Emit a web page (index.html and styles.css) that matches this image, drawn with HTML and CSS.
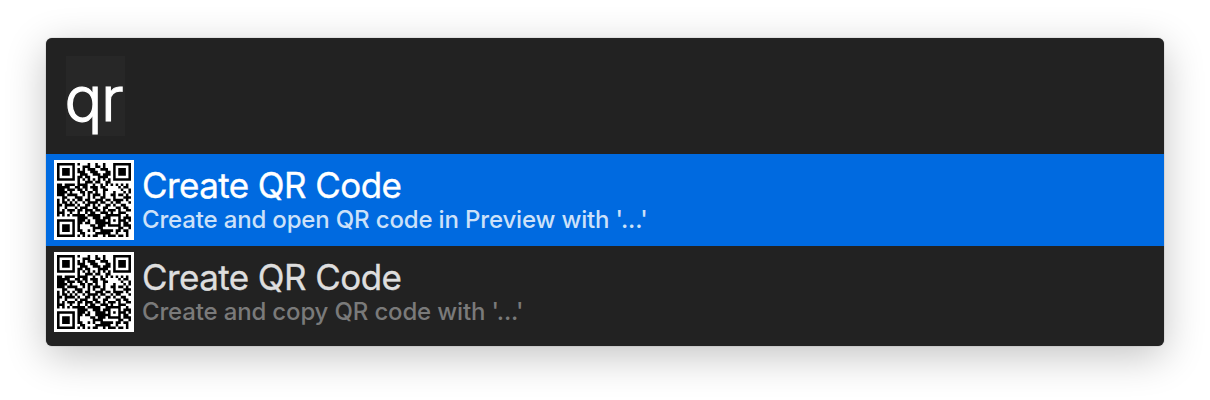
FILE: index.html
```html
<!DOCTYPE html>
<html lang="en">
<head>
<meta charset="utf-8">
<title>Launcher</title>
<link rel="stylesheet" href="styles.css">
</head>
<body>
<main class="launcher">
  <div class="search"><span class="query">qr</span></div>
  <div class="result selected">
    <svg class="code" viewBox="-1.18 -1.18 31.36 31.36"></svg>
    <div class="copy">
      <div class="title">Create QR Code</div>
      <div class="subtitle">Create and open QR code in Preview with '...'</div>
    </div>
  </div>
  <div class="result">
    <svg class="code" viewBox="-1.18 -1.18 31.36 31.36"></svg>
    <div class="copy">
      <div class="title">Create QR Code</div>
      <div class="subtitle">Create and copy QR code with '...'</div>
    </div>
  </div>
</main>
<script src="code.js"></script>
</body>
</html>
```
FILE: styles.css
```css
body {
  box-sizing: border-box;
  height: 400px;
  margin: 0;
  padding: 38px 46px 54px;
  overflow: hidden;
  background: #fff;
  font-family: Inter, "Liberation Sans", sans-serif;
}
.launcher {
  height: 308px;
  background: #222;
  border-radius: 6px;
  overflow: hidden;
  box-shadow: 0 0 1px rgba(0,0,0,.6), 0 10px 40px rgba(0,0,0,.24);
}
.search {
  box-sizing: border-box;
  height: 116px;
  padding: 18px 20px;
}
.query {
  display: block;
  box-sizing: border-box;
  width: 59px;
  height: 80px;
  padding-top: 2px;
  background: #272727;
  color: #fff;
  font-size: 63px;
  line-height: 80px;
  font-weight: 300;
  -webkit-text-stroke: 1.2px #fff;
  letter-spacing: -1.4px;
  text-indent: -1.5px;
  white-space: nowrap;
}
.result {
  display: flex;
  gap: 8px;
  height: 92px;
  box-sizing: border-box;
  padding: 6px 8px;
  color: #dedede;
}
.selected { background: #006ae0; color: #fff; }
.code {
  flex: none;
  width: 80px;
  height: 80px;
  background: #fff;
}
.copy { padding-top: 3px; white-space: nowrap; }
.title {
  font-size: 35px;
  line-height: 44px;
  font-weight: 400;
  -webkit-text-stroke: .35px currentColor;
  letter-spacing: -.58px;
}
.subtitle {
  font-size: 24px;
  line-height: 26px;
  font-weight: 500;
  letter-spacing: -.16px;
  color: #7a7a7a;
}
.selected .subtitle { color: #cce1f9; }
```
FILE: code.js
```js
const rows = [
  "11111110100010010010001111111",
  "10000010001110011010001000001",
  "10111010101011100111001011101",
  "10111010111001110001101011101",
  "10111010011100111011101011101",
  "10000010110110001111001000001",
  "11111110101010101010101111111",
  "00000000100111011001100000000",
  "11011110111100100101010101010",
  "11111001101101110110000010110",
  "11101110110100110011000001001",
  "11110100011011010010001000101",
  "11101111001010111010011011010",
  "00110001110010100110001000111",
  "10101010110110011101101111010",
  "10110101001011110110010110001",
  "11011110100110101001101001100",
  "10010001011100110011000110110",
  "10101110110111011010111010011",
  "11100100100101100111010011100",
  "10101011111011111001111110010",
  "00000000111100111011100010111",
  "11111110111010011110101011101",
  "10000010110110011111100010110",
  "10111010100001101110111110111",
  "10111010100000111100000011001",
  "10111010110010100111110110110",
  "10000010011000011111100100010",
  "11111110101010110010111011010"
];
const path = rows.map((row, y) =>
  [...row].map((cell, x) => cell === "1" ? `M${x} ${y}h1v1h-1z` : "").join("")
).join("");
document.querySelectorAll(".code").forEach(svg => {
  svg.innerHTML = `<path d="${path}" fill="#000"/>`;
});
```
